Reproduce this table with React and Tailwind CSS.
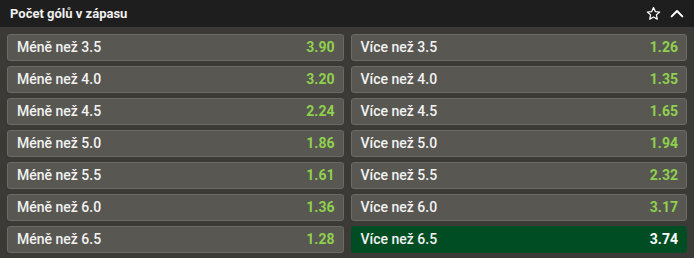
import React from "react";

const rows = [
  ["Méně než 3.5", "3.90", "Více než 3.5", "1.26"],
  ["Méně než 4.0", "3.20", "Více než 4.0", "1.35"],
  ["Méně než 4.5", "2.24", "Více než 4.5", "1.65"],
  ["Méně než 5.0", "1.86", "Více než 5.0", "1.94"],
  ["Méně než 5.5", "1.61", "Více než 5.5", "2.32"],
  ["Méně než 6.0", "1.36", "Více než 6.0", "3.17"],
  ["Méně než 6.5", "1.28", "Více než 6.5", "3.74"],
];

function Cell({ label, odd, selected }) {
  return (
    <div
      className={
        "flex h-[27px] items-center justify-between rounded-[3px] border pl-[9px] pr-[8px] " +
        (selected ? "border-[#004d23] bg-[#004d23]" : "border-[#6a6964] bg-[#595752]")
      }
    >
      <span className="text-[14px] font-medium text-[#f2f2f2]">{label}</span>
      <span className={"text-[14px] font-bold " + (selected ? "text-white" : "text-[#8fd14f]")}>{odd}</span>
    </div>
  );
}

export default function App() {
  return (
    <div className="w-[694px] h-[258px] bg-[#3b3a36]" style={{ fontFamily: "Roboto, 'Liberation Sans', sans-serif" }}>
      <div className="flex h-[27px] items-center justify-between bg-[#1e1e1e] pl-[10px] pr-[9px]">
        <span className="text-[13px] font-bold text-[#f0f0f0]">Počet gólů v zápasu</span>
        <div className="flex items-center gap-[8px]">
          <svg width="15" height="15" viewBox="0 0 24 24" fill="none" stroke="#ffffff" strokeWidth="2" strokeLinejoin="round">
            <polygon points="12,2.5 14.9,8.9 21.8,9.6 16.6,14.2 18.1,21 12,17.5 5.9,21 7.4,14.2 2.2,9.6 9.1,8.9" />
          </svg>
          <svg width="16" height="16" viewBox="0 0 24 24" fill="none" stroke="#ffffff" strokeWidth="3" strokeLinecap="round" strokeLinejoin="round">
            <polyline points="4,15.5 12,7.5 20,15.5" />
          </svg>
        </div>
      </div>
      <div className="grid grid-cols-2 gap-x-[7px] gap-y-[5px] px-[7px] pt-[7px]">
        {rows.map((r, i) => (
          <React.Fragment key={i}>
            <Cell label={r[0]} odd={r[1]} />
            <Cell label={r[2]} odd={r[3]} selected={i === 6} />
          </React.Fragment>
        ))}
      </div>
    </div>
  );
}
